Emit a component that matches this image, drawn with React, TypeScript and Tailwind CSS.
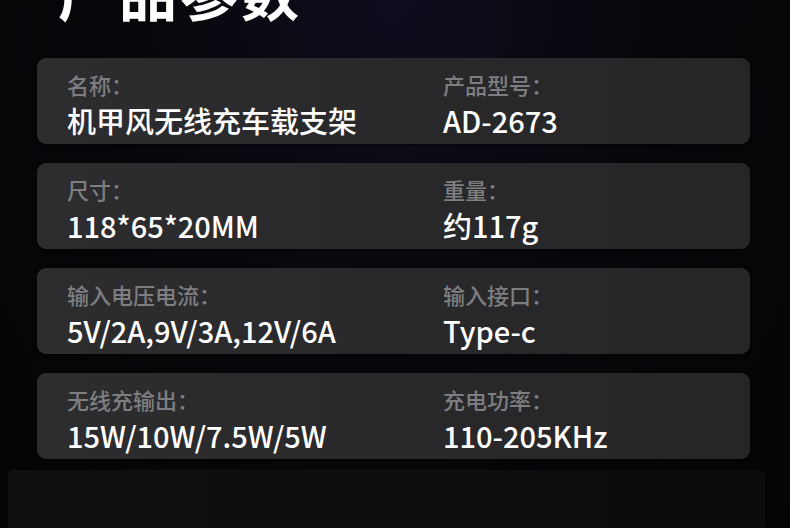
const specs = [
  { a: "名称：", av: "机甲风无线充车载支架", b: "产品型号：", bv: "AD-2673" },
  { a: "尺寸：", av: "118*65*20MM", b: "重量：", bv: "约117g" },
  { a: "输入电压电流：", av: "5V/2A,9V/3A,12V/6A", b: "输入接口：", bv: "Type-c" },
  { a: "无线充输出：", av: "15W/10W/7.5W/5W", b: "充电功率：", bv: "110-205KHz" },
];

function SpecCard({ a, av, b, bv }: { a: string; av: string; b: string; bv: string }) {
  return (
    <div className="grid h-[86px] grid-cols-[376px_1fr] rounded-[9px] bg-gradient-to-r from-[#2d2d30] via-[#29292c] to-[#262628] pl-[30px] pt-[11px] shadow-[0_1px_2px_rgba(0,0,0,0.6)]">
      <div className="flex flex-col">
        <div className="text-[22px] leading-[30px] font-medium text-[#7e7e81]">{a}</div>
        <div className="mt-[3px] text-[29px] leading-[36px] font-medium text-white">{av}</div>
      </div>
      <div className="flex flex-col">
        <div className="text-[22px] leading-[30px] font-medium text-[#7e7e81]">{b}</div>
        <div className="mt-[3px] text-[29px] leading-[36px] font-medium text-white">{bv}</div>
      </div>
    </div>
  );
}

export default function App() {
  return (
    <div
      className="h-[528px] w-[790px] overflow-hidden bg-[radial-gradient(ellipse_at_50%_0%,#0f0d1e_0%,#07070b_45%,#040406_100%)]"
      style={{ fontFamily: '"Noto Sans CJK SC", "Noto Sans", sans-serif' }}
    >
      <div className="-mt-[38px] pl-[58px] text-[58px] leading-[58px] font-bold tracking-[3px] text-white">
        产品参数
      </div>
      <div className="mt-[38px] flex w-[713px] flex-col gap-[19px] ml-[37px]">
        {specs.map((s) => (
          <SpecCard key={s.a} {...s} />
        ))}
      </div>
      <div className="mx-[8px] mt-[11px] mr-[25px] h-[80px] rounded-t-[6px] bg-gradient-to-r from-[#101013] to-[#0b0b0e]" />
    </div>
  );
}
